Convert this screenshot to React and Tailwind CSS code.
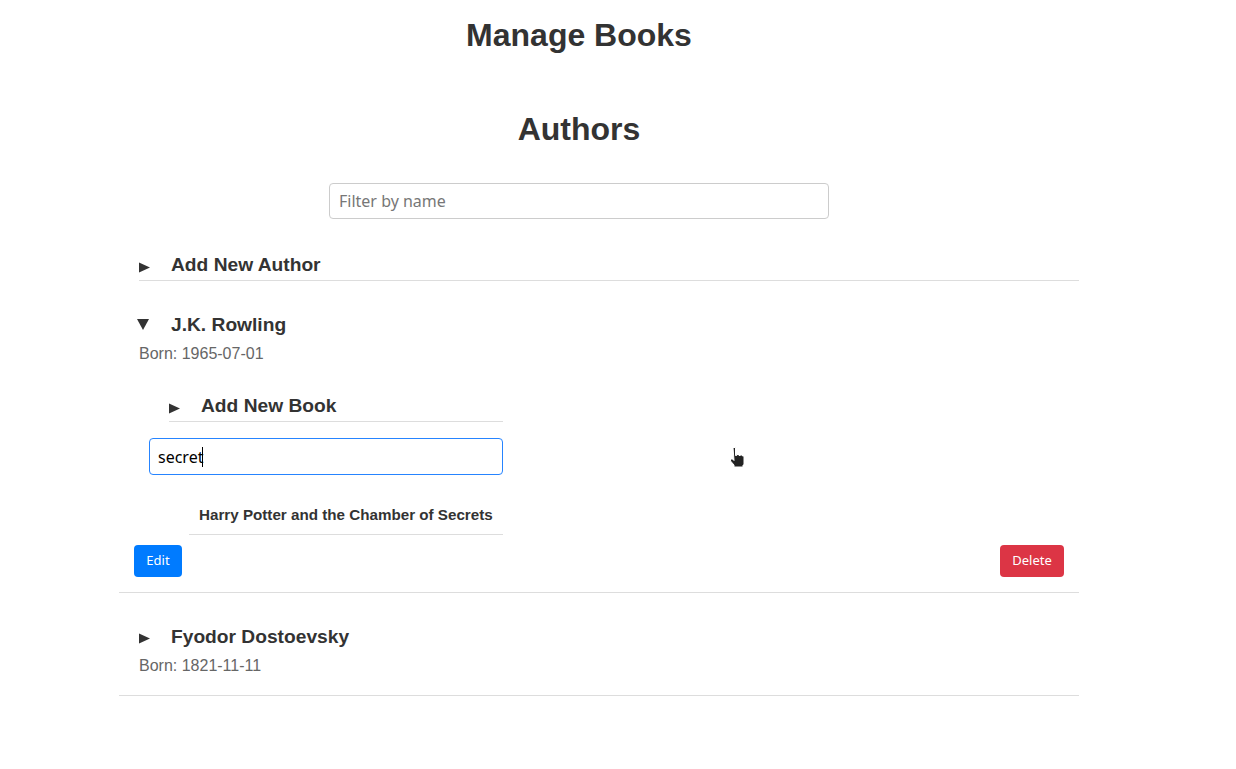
import React from "react";

function Arrow({ open }) {
    if (open) {
        return (
            <svg width="12" height="11" viewBox="0 0 12 11" className="block">
                <path d="M0 0 H12 L6 11 Z" fill="#333" />
            </svg>
        );
    }
    return (
        <svg width="11" height="11" viewBox="0 0 11 11" className="block">
            <path d="M0 0.5 L11 5.5 L0 10.5 Z" fill="#333" />
        </svg>
    );
}

function Summary({ title, open, width, arrowTop }) {
    return (
        <div
            className={`flex items-start pb-[3px] border-b border-[#dddddd] ${width}`}
        >
            <div className={`w-[32px] shrink-0 ${arrowTop}`}>
                <Arrow open={open} />
            </div>
            <span className="text-[19.2px] leading-[24px] font-bold text-[#333]">
                {title}
            </span>
        </div>
    );
}

function HandCursor() {
    return (
        <svg
            width="18"
            height="22"
            viewBox="0 0 18 22"
            className="absolute left-[729px] top-[446px]"
        >
            <path
                d="M4 1.5 h2.5 v8 h1.2 v-1 h2.3 v1 h1.2 v-0.5 h2.3 v1 h1.5 v9 h-1 v2 h-9 v-2 l-3.5 -4 v-2 h2 l1.5 1.5 z"
                fill="#222"
                stroke="#fff"
                strokeWidth="1"
                strokeLinejoin="round"
            />
        </svg>
    );
}

export default function App() {
    return (
        <div className="relative w-[1236px] h-[769px] bg-white text-[#333] font-['Liberation_Sans',Arial,sans-serif]">
            <div className="w-[1158px] flex flex-col items-center">
                <h1 className="mt-[15px] text-[32px] leading-[40px] font-bold">
                    Manage Books
                </h1>
                <h2 className="mt-[54px] text-[32px] leading-[40px] font-bold">
                    Authors
                </h2>
                <input
                    className="mt-[34px] w-[500px] h-[36px] px-[9px] border border-[#cccccc] rounded-[4px] text-[16px] font-['Noto_Sans',sans-serif] placeholder:text-[#777] outline-none"
                    placeholder="Filter by name"
                />
            </div>

            <div className="ml-[119px] w-[960px] mt-[34px]">
                <div className="pl-[20px]">
                    <Summary
                        title="Add New Author"
                        open={false}
                        width="w-full"
                        arrowTop="mt-[9px]"
                    />
                </div>

                {/* J.K. Rowling, expanded */}
                <div className="border-b border-[#dddddd] pt-[32px] pb-[15px]">
                    <div className="pl-[20px]">
                        <div className="flex items-start">
                            <div className="w-[32px] shrink-0 mt-[6px] -ml-[2px] mr-[2px]">
                                <Arrow open />
                            </div>
                            <span className="text-[19.2px] leading-[24px] font-bold">
                                J.K. Rowling
                            </span>
                        </div>
                        <p className="mt-[5px] text-[16px] leading-[24px] text-[#666]">
                            Born: 1965-07-01
                        </p>

                        <div className="ml-[30px] mt-[28px]">
                            <Summary
                                title="Add New Book"
                                open={false}
                                width="w-[334px]"
                                arrowTop="mt-[9px]"
                            />
                        </div>

                        <div className="relative ml-[10px] mt-[16px] w-[354px]">
                            <input
                                className="w-full h-[37px] px-[8px] border border-[#2684ff] rounded-[4px] text-[16px] text-black font-['Noto_Sans',sans-serif] outline-none"
                                defaultValue="secret"
                            />
                            <div className="absolute left-[53px] top-[9px] w-px h-[20px] bg-black" />
                        </div>

                        <div className="ml-[50px] mt-[28px] w-[314px] pl-[10px] pb-[7px] border-b border-[#dddddd]">
                            <span className="text-[15.2px] leading-[20px] font-bold">
                                Harry Potter and the Chamber of Secrets
                            </span>
                        </div>
                    </div>

                    <div className="mt-[10px] px-[15px] flex justify-between font-['Noto_Sans',sans-serif]">
                        <button className="w-[48px] h-[32px] rounded-[4px] bg-[#007bff] text-white text-[13px]">
                            Edit
                        </button>
                        <button className="w-[64px] h-[32px] rounded-[4px] bg-[#dc3545] text-white text-[13px]">
                            Delete
                        </button>
                    </div>
                </div>

                {/* Fyodor Dostoevsky, collapsed */}
                <div className="border-b border-[#dddddd] pt-[32px] pb-[17px] pl-[20px]">
                    <div className="flex items-start">
                        <div className="w-[32px] shrink-0 mt-[8px]">
                            <Arrow open={false} />
                        </div>
                        <span className="text-[19.2px] leading-[24px] font-bold">
                            Fyodor Dostoevsky
                        </span>
                    </div>
                    <p className="mt-[5px] text-[16px] leading-[24px] text-[#666]">
                        Born: 1821-11-11
                    </p>
                </div>
            </div>

            <HandCursor />
        </div>
    );
}
